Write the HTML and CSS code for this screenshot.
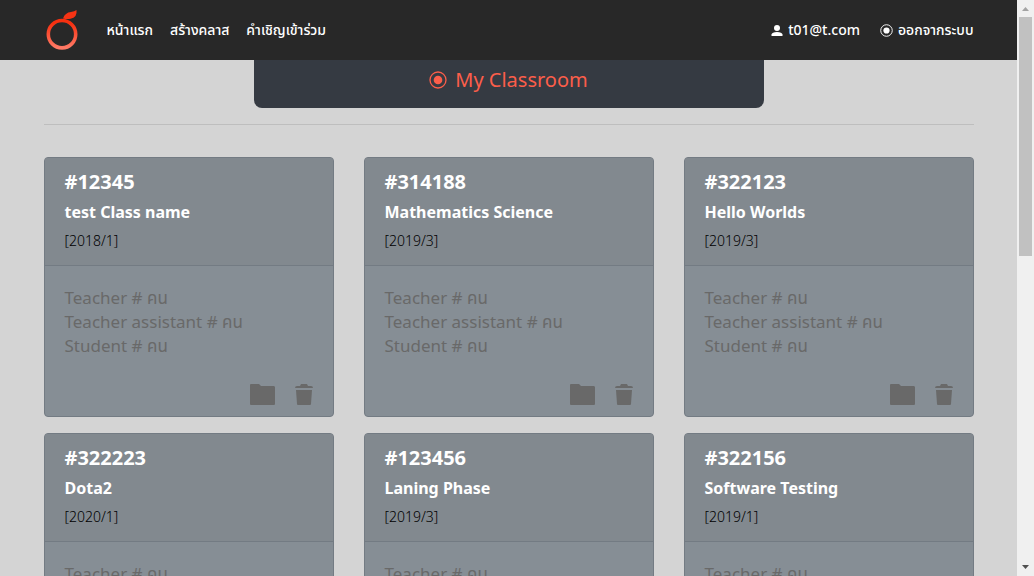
FILE: index.html
```html
<!DOCTYPE html>
<html lang="th">
<head>
<meta charset="utf-8">
<meta name="viewport" content="width=device-width, initial-scale=1">
<title>My Classroom</title>
<link rel="stylesheet" href="styles.css">
</head>
<body>
<svg class="sprite" aria-hidden="true">
  <symbol id="folder" viewBox="0 0 26 22"><path d="M2 0h7l2 2h13a2 2 0 0 1 1 1v17a1 1 0 0 1-1 1H1a1 1 0 0 1-1-1V1a1 1 0 0 1 1-1z"/></symbol>
  <symbol id="trash" viewBox="0 0 18 22"><path d="M6 0h6l1 2h3q2 0 2 2H0q0-2 2-2h3zM1 6h16l-1 14q0 1-1 1H3q-1 0-1-1z"/></symbol>
  <symbol id="target" viewBox="0 0 18 18"><circle cx="9" cy="9" r="8" fill="none" stroke="currentColor" stroke-width="1.3"/><circle cx="9" cy="9" r="4.3"/></symbol>
</svg>
<div class="window">
  <div class="page">
    <header class="navbar">
      <nav class="container nav">
        <a class="brand" href="#" aria-label="Home">
          <svg width="32" height="40" viewBox="0 0 32 40" aria-hidden="true">
            <defs><linearGradient id="fruit" x1="0" y1="0" x2="0" y2="1"><stop offset="0.1" stop-color="#f63010"/><stop offset="1" stop-color="#ff7a66"/></linearGradient></defs>
            <circle cx="16" cy="24.2" r="13.7" fill="none" stroke="url(#fruit)" stroke-width="3.6"/>
            <path fill="#f63314" d="M17 8.5Q19 2.5 25 2Q28.5 1.5 30.5 0Q31.5 7.5 24.5 8.8Q21 9.5 17 8.5z"/>
          </svg>
        </a>
        <a class="link" href="#">หน้าแรก</a>
        <a class="link" href="#">สร้างคลาส</a>
        <a class="link" href="#">คำเชิญเข้าร่วม</a>
        <div class="account">
          <a class="link" href="#"><svg width="12" height="11" viewBox="0 0 12 11" aria-hidden="true"><circle cx="6" cy="3" r="3"/><path d="M0.5 11V9.5Q1 7 6 7t5.5 2.5V11z"/></svg>t01@t.com</a>
          <a class="link" href="#"><svg width="13" height="13" aria-hidden="true"><use href="#target"/></svg>ออกจากระบบ</a>
        </div>
      </nav>
    </header>
    <main class="container">
      <h1 class="banner"><svg width="18" height="18" aria-hidden="true"><use href="#target"/></svg>My Classroom</h1>
      <hr class="rule">
      <div class="cards" id="cards"></div>
    </main>
  </div>
  <div class="scrollbar" aria-hidden="true">
    <svg width="17" height="17" viewBox="0 0 17 17"><path fill="#a3a3a3" d="M5 11h7L8.5 7z"/></svg>
    <div class="track"><div class="thumb"></div></div>
    <svg width="17" height="16" viewBox="0 0 17 16"><path fill="#505050" d="M5 5h7L8.5 9z"/></svg>
  </div>
</div>
<script src="script.js"></script>
</body>
</html>
```
FILE: styles.css
```css
* { box-sizing: border-box; }
body {
  margin: 0;
  font: 17px/24px "Noto Sans", "Noto Sans Thai", sans-serif;
  background: #d4d4d4;
}
svg { fill: currentColor; flex: none; }
.sprite { display: none; }
.window { display: flex; height: 100vh; }
.page { flex: 1; min-width: 0; overflow: hidden; }
.container { width: 100%; max-width: 960px; margin: 0 auto; padding: 0 15px; }
.navbar { background: #282828; }
.nav { display: flex; align-items: center; gap: 17px; height: 60px; }
.brand { display: flex; margin: 0 12px 0 2px; }
.link {
  display: flex;
  align-items: center;
  gap: 5px;
  color: #fff;
  font-size: 14px;
  font-weight: 500;
  text-decoration: none;
  white-space: nowrap;
}
.account { display: flex; gap: 20px; margin-left: auto; }
.banner {
  display: flex;
  align-items: center;
  justify-content: center;
  gap: 8px;
  max-width: 510px;
  margin: 0 auto;
  padding: 8px 16px 16px;
  border-radius: 0 0 8px 8px;
  background: #353a42;
  color: #fc5e4a;
  font-size: 20px;
  font-weight: 400;
  line-height: 24px;
}
.rule { margin: 16px 0 32px; border: 0; border-top: 1px solid #bebebe; }
.cards {
  display: grid;
  grid-template-columns: repeat(auto-fill, minmax(260px, 1fr));
  gap: 16px 30px;
}
.card { border: 1px solid #737b83; border-radius: 4px; background: #868e95; overflow: hidden; }
.card-head { padding: 12px 20px; border-bottom: 1px solid #737b83; background: #82898f; color: #fff; }
.code { margin: 0 0 8px; font-size: 20px; line-height: 24px; }
.name { margin: 0 0 7px; font-size: 16px; line-height: 20px; }
.term { margin: 0; color: #000; font-size: 14px; font-weight: 300; line-height: 24px; }
.card-body { padding: 20px 20px 10px; color: #696969; }
.card-body p { margin: 0; }
.actions { display: flex; justify-content: flex-end; gap: 19px; margin-top: 26px; }
.icon { display: flex; padding: 0; border: 0; background: none; color: #696969; cursor: pointer; }
.scrollbar { display: flex; flex-direction: column; width: 17px; background: #f0f0f0; }
.track { flex: 1; padding: 0 2px; }
.thumb { height: 44%; background: #c1c1c1; }
```
FILE: script.js
```js
const classes = [
  ["#12345", "test Class name", "[2018/1]"],
  ["#314188", "Mathematics Science", "[2019/3]"],
  ["#322123", "Hello Worlds", "[2019/3]"],
  ["#322223", "Dota2", "[2020/1]"],
  ["#123456", "Laning Phase", "[2019/3]"],
  ["#322156", "Software Testing", "[2019/1]"]
];
document.getElementById("cards").innerHTML = classes.map(([code, name, term]) => `
  <article class="card">
    <div class="card-head">
      <h2 class="code">${code}</h2>
      <h3 class="name">${name}</h3>
      <p class="term">${term}</p>
    </div>
    <div class="card-body">
      <p>Teacher # คน</p>
      <p>Teacher assistant # คน</p>
      <p>Student # คน</p>
      <div class="actions">
        <button class="icon" type="button" aria-label="Open"><svg width="26" height="22"><use href="#folder"/></svg></button>
        <button class="icon" type="button" aria-label="Delete"><svg width="18" height="22"><use href="#trash"/></svg></button>
      </div>
    </div>
  </article>`).join("");
```
